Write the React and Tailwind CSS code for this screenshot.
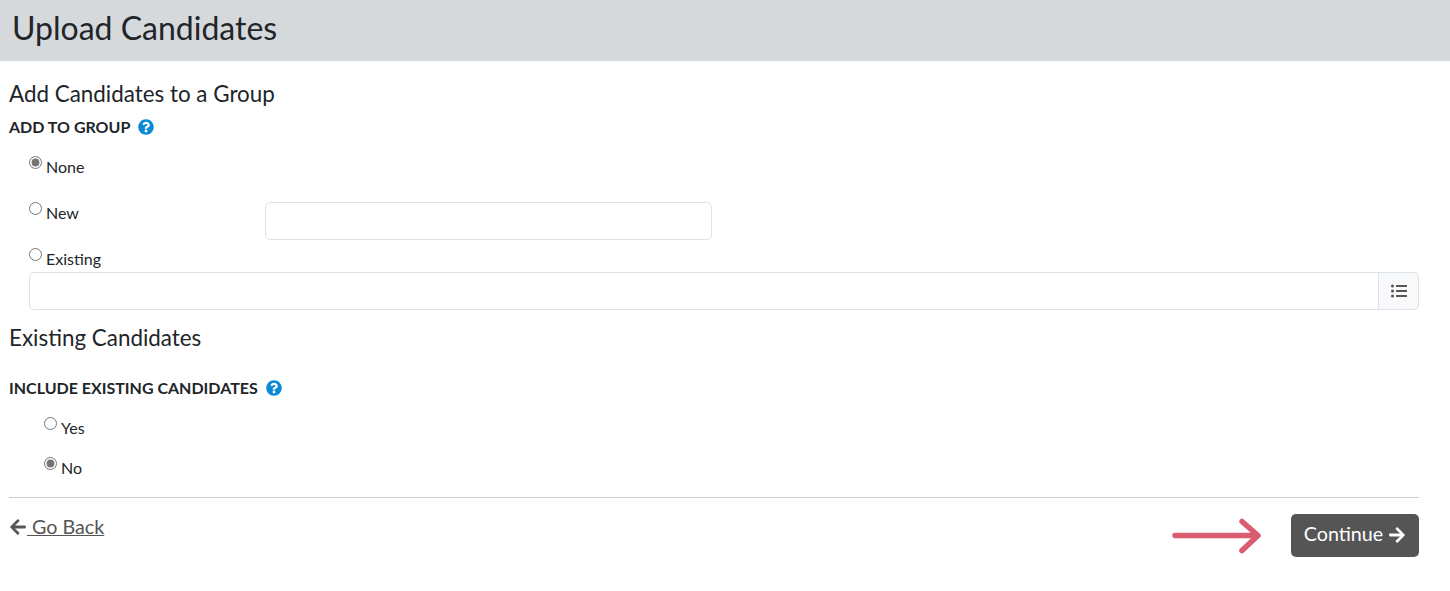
import { FaArrowLeft, FaArrowRight, FaListUl, FaQuestionCircle } from 'react-icons/fa'

function HelpIcon() {
  return <FaQuestionCircle size={16} className="ml-2 text-[#0a8ad6]" />
}

function Radio({ label, checked, className = '' }) {
  return (
    <label className={`flex items-start ${className}`}>
      <input type="radio" defaultChecked={checked} className="w-[13px] h-[13px] mt-[1px] accent-[#757575]" />
      <span className="ml-[4px] mt-[3px] text-[16px] leading-[18px]">{label}</span>
    </label>
  )
}

export default function App() {
  return (
    <div className="font-['Lato',sans-serif] text-[#212529] bg-white min-h-[591px]">
      <div className="h-[61px] bg-[#d6d9dc] pl-[12px] pb-[5px] flex items-center">
        <h1 className="text-[32px] leading-[56px]">Upload Candidates</h1>
      </div>

      <div className="pl-[9px] pr-[31px]">
        <h2 className="mt-[19px] text-[22.4px] leading-[28px]">Add Candidates to a Group</h2>
        <div className="mt-[9px] flex items-center font-bold text-[16px] leading-[20px]">
          ADD TO GROUP <HelpIcon />
        </div>

        <div className="pl-[20px]">
          <Radio label="None" checked className="mt-[18px]" />
          <div className="flex mt-[25px] h-[21px]">
            <Radio label="New" className="w-[236px]" />
            <input type="text" className="w-[447px] h-[38px] mt-[1px] border border-[#dee2e6] rounded-[5px]" />
          </div>
          <Radio label="Existing" className="mt-[25px]" />
          <div className="flex mt-[4px]">
            <input type="text" className="flex-1 h-[38px] border border-[#dee2e6] rounded-l-[5px]" />
            <button className="w-[41px] h-[38px] -ml-px border border-[#dee2e6] rounded-r-[5px] bg-[#f8f9fa] flex items-center justify-center">
              <FaListUl size={16} className="text-[#555]" />
            </button>
          </div>
        </div>

        <h2 className="mt-[14px] text-[22.4px] leading-[28px]">Existing Candidates</h2>
        <div className="mt-[26px] flex items-center font-bold text-[16px] leading-[20px]">
          INCLUDE EXISTING CANDIDATES <HelpIcon />
        </div>

        <div className="pl-[35px]">
          <Radio label="Yes" className="mt-[18px]" />
          <Radio label="No" checked className="mt-[19px]" />
        </div>

        <hr className="mt-[20px] border-[#ccc]" />

        <div className="flex justify-between">
          <a className="mt-[17px] h-[24px] flex items-center text-[19.7px] leading-[24px] text-[#555] underline whitespace-pre">
            <FaArrowLeft size={18} /> Go Back
          </a>
          <div className="flex items-center mt-[16px]">
            <svg width="92" height="36" viewBox="0 0 92 36" className="mr-[27px]">
              <path d="M3 17.5H84M70 3.5L86 17.5L70 32.5" fill="none" stroke="#d95c70" strokeWidth="5.5" strokeLinecap="round" strokeLinejoin="round" />
            </svg>
            <button className="w-[128px] h-[43px] pb-[3px] bg-[#555] text-white rounded-[5px] text-[19.7px] flex items-center justify-center">
              Continue <FaArrowRight size={18} className="ml-[5px] mt-[1px]" />
            </button>
          </div>
        </div>
      </div>
    </div>
  )
}
